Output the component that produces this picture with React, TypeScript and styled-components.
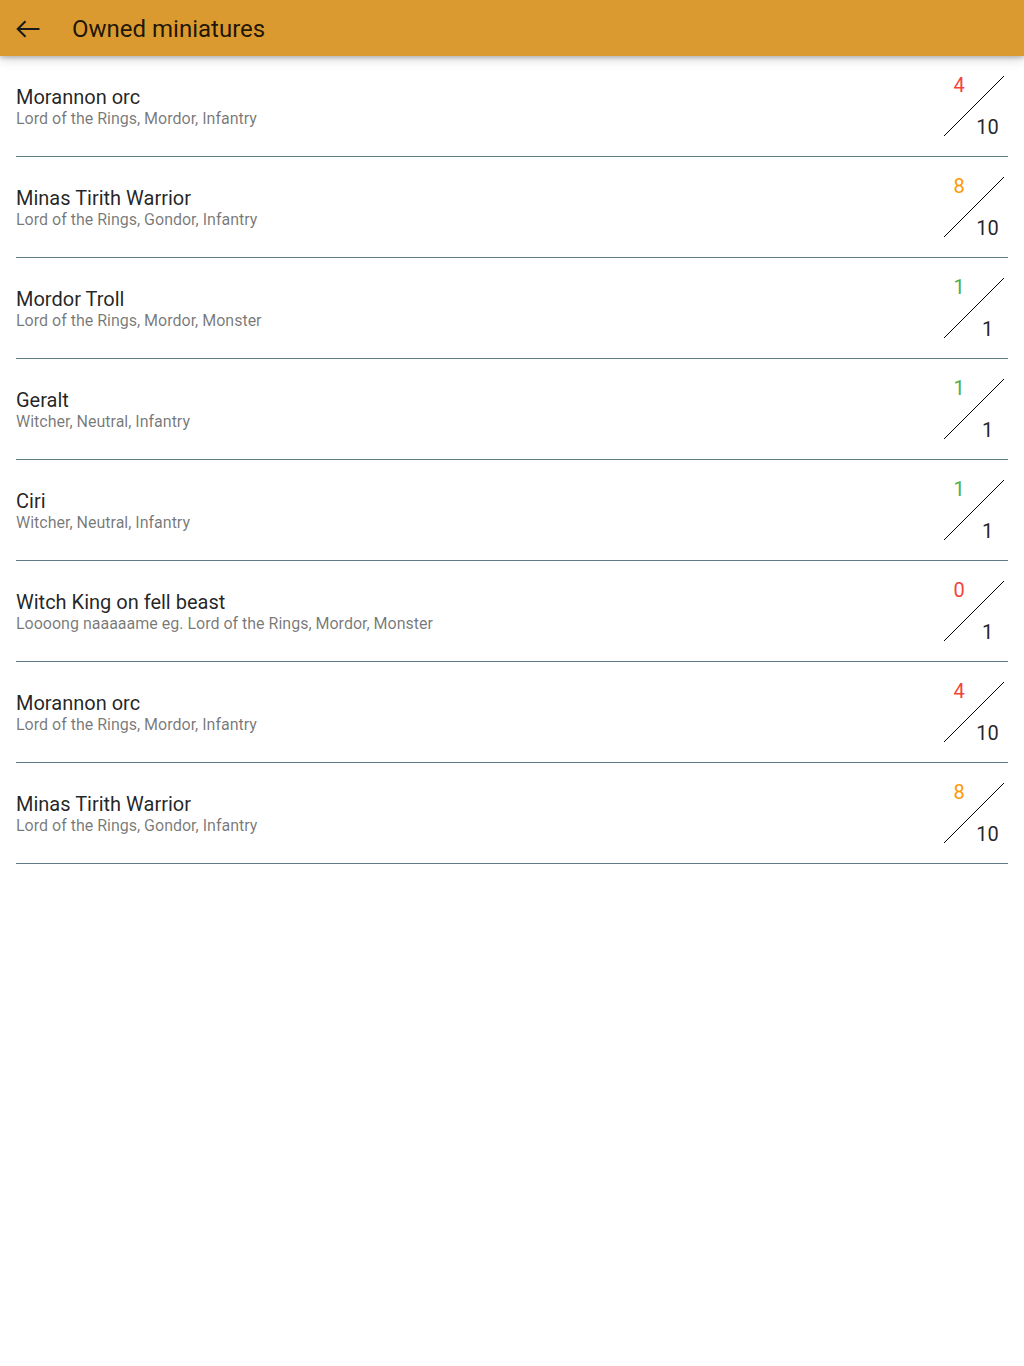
import React from 'react'
import styled, { createGlobalStyle } from 'styled-components'

const GlobalStyle = createGlobalStyle`
  html, body {
    margin: 0;
    padding: 0;
    background: #ffffff;
    font-family: Roboto, "Liberation Sans", sans-serif;
  }
`

type Miniature = {
  name: string
  tags: string
  owned: number
  total: number
}

const miniatures: Miniature[] = [
  { name: 'Morannon orc', tags: 'Lord of the Rings, Mordor, Infantry', owned: 4, total: 10 },
  { name: 'Minas Tirith Warrior', tags: 'Lord of the Rings, Gondor, Infantry', owned: 8, total: 10 },
  { name: 'Mordor Troll', tags: 'Lord of the Rings, Mordor, Monster', owned: 1, total: 1 },
  { name: 'Geralt', tags: 'Witcher, Neutral, Infantry', owned: 1, total: 1 },
  { name: 'Ciri', tags: 'Witcher, Neutral, Infantry', owned: 1, total: 1 },
  { name: 'Witch King on fell beast', tags: 'Loooong naaaaame eg. Lord of the Rings, Mordor, Monster', owned: 0, total: 1 },
  { name: 'Morannon orc', tags: 'Lord of the Rings, Mordor, Infantry', owned: 4, total: 10 },
  { name: 'Minas Tirith Warrior', tags: 'Lord of the Rings, Gondor, Infantry', owned: 8, total: 10 },
]

// red when under half, orange when partly there, green when complete
const ratioColor = (owned: number, total: number) => {
  if (owned >= total) return '#4caf50'
  if (owned / total >= 0.5) return '#ff9800'
  return '#f44336'
}

export default function App() {
  return (
    <Page>
      <GlobalStyle />
      <AppBar>
        <BackButton aria-label="back">
          <svg width="24" height="18" viewBox="0 0 24 18" fill="none">
            <path d="M9.5 1.2L1.7 9l7.8 7.8M1.7 9H23.5" stroke="#1a1a1a" strokeWidth="2" />
          </svg>
        </BackButton>
        <Title>Owned miniatures</Title>
      </AppBar>
      <List>
        {miniatures.map((m, i) => (
          <Row key={i}>
            <Info>
              <Name>{m.name}</Name>
              <Tags>{m.tags}</Tags>
            </Info>
            <Counter>
              <Slash viewBox="0 0 60 60">
                <line x1="0" y1="60" x2="60" y2="0" stroke="#000" strokeWidth="1" />
              </Slash>
              <Owned $color={ratioColor(m.owned, m.total)}>{m.owned}</Owned>
              <Total>{m.total}</Total>
            </Counter>
          </Row>
        ))}
      </List>
    </Page>
  )
}

const Page = styled.div`
  min-height: 1366px;
  background: #ffffff;
`

const AppBar = styled.header`
  height: 56px;
  display: flex;
  align-items: center;
  background-color: #da9a2f;
  box-shadow: 0 2px 4px rgba(0, 0, 0, 0.2), 0 4px 10px rgba(0, 0, 0, 0.14);
  position: relative;
  z-index: 1;
`

const BackButton = styled.button`
  width: 56px;
  height: 56px;
  display: flex;
  align-items: center;
  justify-content: center;
  padding: 1px 0 0;
  border: none;
  background: transparent;
  cursor: pointer;
`

const Title = styled.h1`
  margin: 0 0 0 16px;
  padding-top: 2px;
  font-size: 24px;
  line-height: 28px;
  font-weight: 400;
  color: rgba(0, 0, 0, 0.87);
`

const List = styled.div`
  margin: 0 16px;
`

const Row = styled.div`
  height: 100px;
  display: flex;
  align-items: center;
  justify-content: space-between;
  border-bottom: 1px solid #5f7b87;
`

const Info = styled.div`
  display: flex;
  flex-direction: column;
  padding-top: 1px;
`

const Name = styled.div`
  font-size: 20px;
  line-height: 24px;
  color: rgba(0, 0, 0, 0.87);
`

const Tags = styled.div`
  font-size: 16px;
  line-height: 20px;
  color: rgba(0, 0, 0, 0.54);
`

const Counter = styled.div`
  position: relative;
  width: 60px;
  height: 60px;
  margin-right: 4px;
  display: grid;
  grid-template-columns: 30px 27px;
  grid-template-rows: 1fr 1fr;
`

const Slash = styled.svg`
  position: absolute;
  inset: 0;
  width: 60px;
  height: 60px;
`

const Owned = styled.span<{ $color: string }>`
  grid-column: 1;
  grid-row: 1;
  justify-self: center;
  align-self: start;
  margin-top: -1px;
  font-size: 20px;
  line-height: 20px;
  color: ${(p) => p.$color};
`

const Total = styled.span`
  grid-column: 2;
  grid-row: 2;
  justify-self: center;
  align-self: end;
  margin-bottom: -1px;
  font-size: 20px;
  line-height: 20px;
  color: rgba(0, 0, 0, 0.87);
`
